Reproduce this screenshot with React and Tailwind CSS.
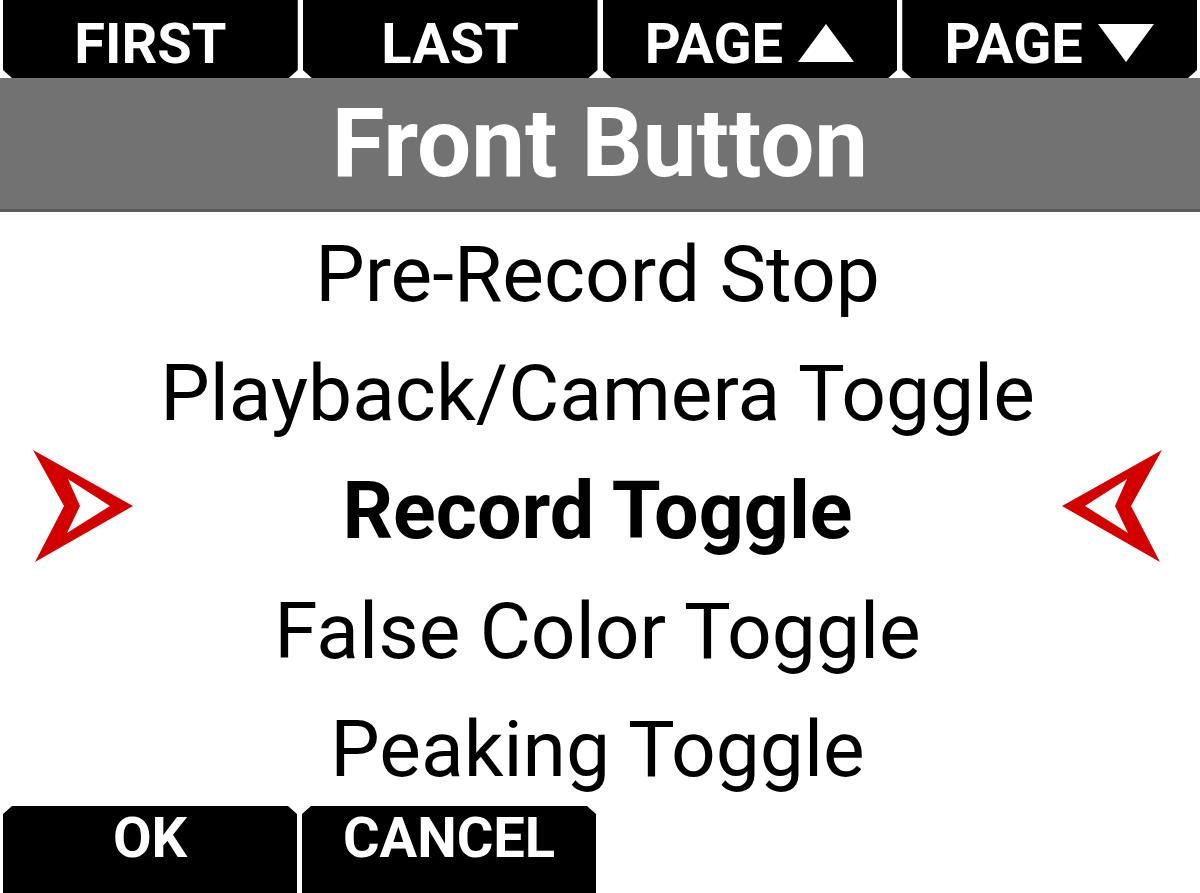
import React from "react";

/* ================= DATA ================= */
const topTabs = [
  { label: "FIRST" },
  { label: "LAST" },
  { label: "PAGE", arrow: "up" },
  { label: "PAGE", arrow: "down" },
];

const options = [
  "Pre-Record Stop",
  "Playback/Camera Toggle",
  "Record Toggle",
  "False Color Toggle",
  "Peaking Toggle",
];

const selectedIndex = 2;

/* ================= ICONS ================= */
const Caret = ({ dir }) => (
  <svg width="58" height="40" viewBox="0 0 58 40" className="ml-[14px]">
    {dir === "up" ? (
      <path d="M29 1 L57 39 L1 39 Z" fill="white" />
    ) : (
      <path d="M1 1 L57 1 L29 39 Z" fill="white" />
    )}
  </svg>
);

const Pointer = ({ flip }) => (
  <svg
    width="100"
    height="112"
    viewBox="0 0 100 112"
    className={`shrink-0 mb-[5px] ${flip ? "-scale-x-100" : ""}`}
  >
    <path
      fillRule="evenodd"
      fill="#d30000"
      d="M0 0 L100 56 L2 112 L31 56 Z M35 29 L77 56 L34 83 L47 56 Z"
    />
  </svg>
);

/* ================= APP ================= */
export default function App() {
  return (
    <div
      className="w-[1200px] h-[893px] bg-white flex flex-col overflow-hidden"
      style={{ fontFamily: "Roboto, 'Liberation Sans', sans-serif" }}
    >
      {/* ===== TOP SOFT KEYS ===== */}
      <div className="h-[78px] flex gap-[5px] px-[3px] bg-white shrink-0">
        {topTabs.map((tab, i) => (
          <div
            key={i}
            className="flex-1 bg-black text-white flex justify-center pt-[16px] [clip-path:polygon(0_0,100%_0,100%_calc(100%_-_8px),calc(100%_-_9px)_100%,9px_100%,0_calc(100%_-_8px))]"
          >
            <span className="text-[56px] font-bold leading-none flex items-start">
              {tab.label}
              {tab.arrow && (
                <span className="mt-[7px]">
                  <Caret dir={tab.arrow} />
                </span>
              )}
            </span>
          </div>
        ))}
      </div>

      {/* ===== HEADER ===== */}
      <div className="h-[134px] shrink-0 bg-[#727272] border-b-[3px] border-[#5a5a5a] flex items-center justify-center">
        <h1 className="text-white text-[96px] font-bold leading-none mb-[2px]">
          Front Button
        </h1>
      </div>

      {/* ===== OPTIONS ===== */}
      <div className="flex-1 flex flex-col">
        {options.map((opt, i) => {
          const active = i === selectedIndex;
          return (
            <div key={opt} className="flex-1 flex items-center pl-[33px] pr-[38px]">
              {active ? <Pointer /> : <div className="w-[100px] shrink-0" />}
              <div
                className={`flex-1 text-center text-black leading-none pt-[6px] ${
                  active ? "font-bold text-[79px]" : "font-normal text-[78.5px]"
                }`}
              >
                {opt}
              </div>
              {active ? <Pointer flip /> : <div className="w-[100px] shrink-0" />}
            </div>
          );
        })}
      </div>

      {/* ===== BOTTOM SOFT KEYS ===== */}
      <div className="h-[87px] shrink-0 flex gap-[5px] pl-[3px] bg-white">
        {["OK", "CANCEL"].map((label) => (
          <div
            key={label}
            className="w-[294px] bg-black text-white flex justify-center pt-[4px] [clip-path:polygon(9px_0,calc(100%_-_9px)_0,100%_8px,100%_100%,0_100%,0_8px)]"
          >
            <span className="text-[56px] font-bold leading-none">{label}</span>
          </div>
        ))}
      </div>
    </div>
  );
}
